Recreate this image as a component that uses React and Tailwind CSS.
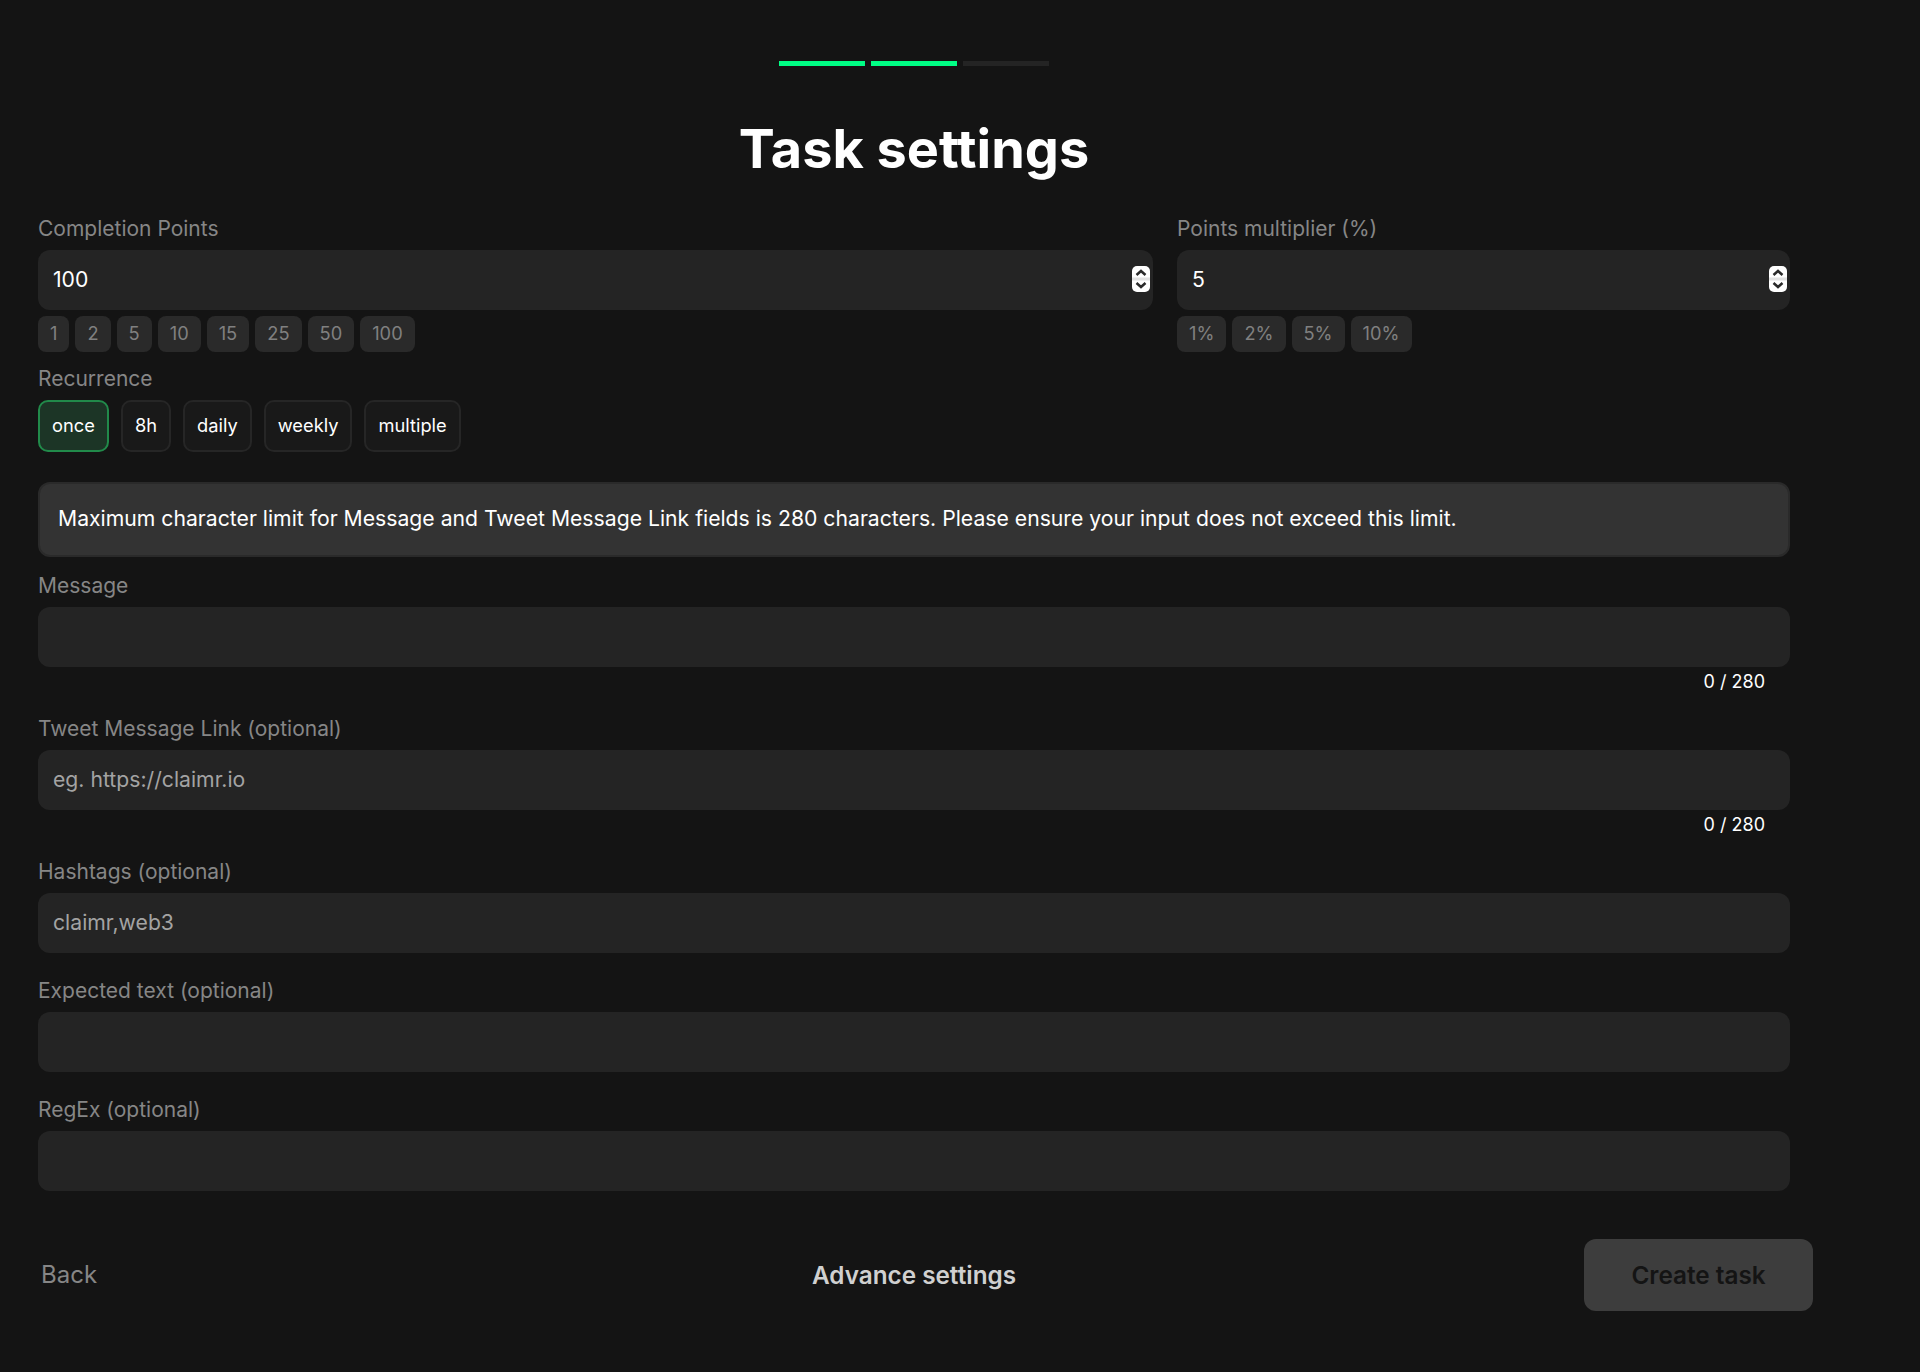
const pointChips = ["1", "2", "5", "10", "15", "25", "50", "100"];
const multiplierChips = ["1%", "2%", "5%", "10%"];
const recurrence = ["once", "8h", "daily", "weekly", "multiple"];

function Label({ children }) {
  return <label className="block text-[21px] leading-[30px] text-[#868686] mb-[6px]">{children}</label>;
}

function Spinner() {
  return (
    <svg className="absolute right-[3px] top-4" width="18" height="26" viewBox="0 0 18 26">
      <rect width="18" height="26" rx="5" fill="#ffffff" />
      <rect y="11.5" width="18" height="3" fill="#e2e2e2" />
      <path d="M4.5 9 L9 5 L13.5 9" fill="none" stroke="#2a2a2a" strokeWidth="2.5" />
      <path d="M4.5 17 L9 21 L13.5 17" fill="none" stroke="#2a2a2a" strokeWidth="2.5" />
    </svg>
  );
}

function Field({ value, placeholder, number }) {
  return (
    <div className="relative">
      <input
        readOnly
        value={value || ""}
        placeholder={placeholder}
        className={`w-full h-[60px] rounded-xl bg-[#242424] px-[15px] pb-[2px] text-[21.2px] outline-none placeholder:text-[#a3a3a3] ${
          number ? "text-white" : "text-[#a3a3a3]"
        }`}
      />
      {number && <Spinner />}
    </div>
  );
}

function Chips({ items }) {
  return (
    <div className="flex gap-[6px] mt-[6px]">
      {items.map((item) => (
        <button key={item} className="h-9 px-3 rounded-lg bg-[#2a2a2a] text-[#808080] text-[18.3px]">
          {item}
        </button>
      ))}
    </div>
  );
}

function Counter() {
  return <div className="text-right text-[18px] leading-[26px] text-white pr-[25px] mt-[2px] mb-[19px]">0 / 280</div>;
}

export default function App() {
  return (
    <div className="min-h-[1372px] bg-[#141414] font-['Inter',sans-serif] px-[38px]">
      <div className="w-[1752px]">
        <div className="flex justify-center gap-[6px] pt-[61px]">
          <div className="w-[86px] h-[5px] bg-[#00ff85]" />
          <div className="w-[86px] h-[5px] bg-[#00ff85]" />
          <div className="w-[86px] h-[5px] bg-[#242424]" />
        </div>
        <h1 className="text-center text-white font-bold text-[54px] leading-[60px] mt-[53px] mb-[35px]">Task settings</h1>

        <div className="flex gap-6">
          <div className="w-[1115px]">
            <Label>Completion Points</Label>
            <Field value="100" number />
            <Chips items={pointChips} />
          </div>
          <div className="flex-1">
            <Label>Points multiplier (%)</Label>
            <Field value="5" number />
            <Chips items={multiplierChips} />
          </div>
        </div>

        <div className="mt-3">
          <Label>Recurrence</Label>
          <div className="flex gap-3">
            {recurrence.map((item) => (
              <button
                key={item}
                className={`h-[52px] px-[12px] rounded-[10px] border-2 text-[18.3px] text-white ${
                  item === "once" ? "bg-[#1c3526] border-[#218a4a]" : "bg-[#191919] border-[#262626]"
                }`}
              >
                {item}
              </button>
            ))}
          </div>
        </div>

        <div className="mt-[30px] mb-[14px] h-[75px] flex items-center rounded-xl border-2 border-[#2a2a2a] bg-[#333333] px-[18px] pb-px text-[21.2px] text-white">
          Maximum character limit for Message and Tweet Message Link fields is 280 characters. Please ensure your input does not exceed this limit.
        </div>

        <Label>Message</Label>
        <Field />
        <Counter />

        <Label>Tweet Message Link (optional)</Label>
        <Field placeholder="eg. https://claimr.io" />
        <Counter />

        <Label>Hashtags (optional)</Label>
        <Field placeholder="claimr,web3" />

        <div className="mt-[23px]">
          <Label>Expected text (optional)</Label>
          <Field />
        </div>

        <div className="mt-[23px]">
          <Label>RegEx (optional)</Label>
          <Field />
        </div>

        <div className="flex items-center mt-[48px]">
          <div className="flex-1">
            <button className="pl-[3px] text-[24px] text-[#868686]">Back</button>
          </div>
          <button className="text-[24.3px] font-semibold text-[#d0d0d0]">Advance settings</button>
          <div className="flex-1 flex justify-end">
            <button className="w-[229px] h-[72px] -mr-[23px] rounded-xl bg-[#3d3d3d] text-[24.3px] font-semibold text-[#141414]">
              Create task
            </button>
          </div>
        </div>
      </div>
    </div>
  );
}
